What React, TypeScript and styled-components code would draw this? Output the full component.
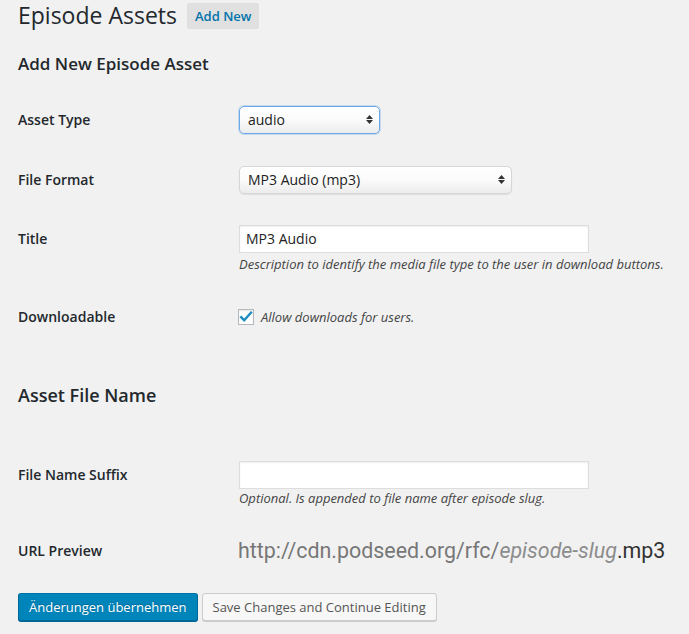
import React from "react";
import styled, { createGlobalStyle } from "styled-components";

const Global = createGlobalStyle`
  html, body { margin: 0; padding: 0; background: #f1f1f1; }
  body { font-family: "Open Sans", "DejaVu Sans", sans-serif; color: #23282d; font-size: 13px; }
  * { box-sizing: border-box; }
`;

const Page = styled.div`
  padding: 0 18px;
  width: 689px;
  height: 634px;
  overflow: hidden;
`;

const TitleBar = styled.div`
  display: flex;
  align-items: center;
  gap: 10px;
  padding-top: 1px;
  height: 30px;
`;

const PageTitle = styled.h1`
  margin: 0;
  font-size: 23px;
  font-weight: 400;
  line-height: 29px;
  color: #23282d;
`;

const AddNew = styled.a`
  display: inline-block;
  background: #e0e0e0;
  color: #0073aa;
  font-size: 13px;
  font-weight: 600;
  line-height: 18px;
  padding: 4px 8px;
  border-radius: 2px;
  text-decoration: none;
`;

const SectionTitle = styled.h2<{ $top: number; $size?: number }>`
  margin: ${(p) => p.$top}px 0 0;
  font-size: ${(p) => p.$size ?? 17}px;
  font-weight: 600;
  line-height: 24px;
  color: #23282d;
`;

const Row = styled.div<{ $pt: number; $pb: number }>`
  display: grid;
  grid-template-columns: 221px 1fr;
  padding: ${(p) => p.$pt}px 0 ${(p) => p.$pb}px;
`;

const Label = styled.div<{ $h?: number }>`
  font-size: 14px;
  font-weight: 600;
  line-height: ${(p) => p.$h ?? 28}px;
  color: #23282d;
`;

const Field = styled.div`
  display: flex;
  flex-direction: column;
  align-items: flex-start;
`;

const Select = styled.div<{ $w: number; $focus?: boolean }>`
  position: relative;
  width: ${(p) => p.$w}px;
  height: 28px;
  border-radius: 5px;
  border: 1px solid ${(p) => (p.$focus ? "#6fa8e6" : "#d6d6d6")};
  background: linear-gradient(#ffffff 0%, #fbfbfb 50%, #ececec 100%);
  box-shadow: ${(p) =>
    p.$focus ? "0 0 0 1px rgba(111,168,230,0.35)" : "0 1px 1px rgba(0,0,0,0.08)"};
  font-size: 14px;
  line-height: 26px;
  padding-left: 8px;
  color: #222;
`;

const Arrows = styled.span`
  position: absolute;
  right: 6px;
  top: 8px;
  display: flex;
  flex-direction: column;
  gap: 1px;
`;

const TextInput = styled.div`
  width: 350px;
  height: 28px;
  background: #fff;
  border: 1px solid #ddd;
  box-shadow: inset 0 1px 2px rgba(0, 0, 0, 0.07);
  font-size: 14px;
  line-height: 26px;
  padding-left: 6px;
  color: #222;
`;

const Desc = styled.p<{ $mt?: number }>`
  margin: ${(p) => p.$mt ?? 2}px 0 0;
  font-size: 13px;
  font-style: italic;
  line-height: 18px;
  color: #444;
`;

const CheckLine = styled.label`
  display: flex;
  align-items: center;
  gap: 7px;
  height: 28px;
  font-size: 13px;
  font-style: italic;
  color: #444;
  margin-left: -1px;
`;

const Box = styled.span`
  width: 16px;
  height: 16px;
  background: #fff;
  border: 1px solid #b4b9be;
  box-shadow: inset 0 1px 2px rgba(0, 0, 0, 0.1);
  display: flex;
  align-items: center;
  justify-content: center;
`;

const Url = styled.div`
  font-family: Roboto, "Liberation Sans", sans-serif;
  font-size: 21.4px;
  line-height: 28px;
  color: #777;
  margin-left: -1px;
`;

const Slug = styled.span`
  font-style: italic;
  color: #8c8c8c;
`;

const Ext = styled.span`
  color: #333;
`;

const Actions = styled.div`
  display: flex;
  gap: 4px;
  margin-top: 28px;
`;

const Button = styled.button<{ $primary?: boolean }>`
  font-family: "Open Sans", "DejaVu Sans", sans-serif;
  font-size: 13px;
  height: 28px;
  line-height: 26px;
  padding: 0 10px 1px;
  border-radius: 3px;
  border: 1px solid;
  cursor: pointer;
  ${(p) =>
    p.$primary
      ? `background:#0085ba;border-color:#0073aa #006799 #006799;color:#fff;box-shadow:0 1px 0 #006799;text-shadow:0 -1px 1px #006799;`
      : `background:#f7f7f7;border-color:#ccc;color:#555;box-shadow:0 1px 0 #ccc;`}
`;

const SelectArrows = () => (
  <Arrows>
    <svg width="7" height="4" viewBox="0 0 7 4"><path d="M3.5 0L7 4H0z" fill="#333" /></svg>
    <svg width="7" height="4" viewBox="0 0 7 4"><path d="M0 0h7L3.5 4z" fill="#333" /></svg>
  </Arrows>
);

export default function App() {
  return (
    <Page>
      <Global />
      <TitleBar>
        <PageTitle>Episode Assets</PageTitle>
        <AddNew href="#">Add New</AddNew>
      </TitleBar>
      <SectionTitle $top={22}>Add New Episode Asset</SectionTitle>

      <Row $pt={30} $pb={16}>
        <Label>Asset Type</Label>
        <Field>
          <Select $w={141} $focus>
            audio
            <SelectArrows />
          </Select>
        </Field>
      </Row>
      <Row $pt={16} $pb={16}>
        <Label>File Format</Label>
        <Field>
          <Select $w={273}>
            MP3 Audio (mp3)
            <SelectArrows />
          </Select>
        </Field>
      </Row>
      <Row $pt={15} $pb={16}>
        <Label>Title</Label>
        <Field>
          <TextInput>MP3 Audio</TextInput>
          <Desc>Description to identify the media file type to the user in download buttons.</Desc>
        </Field>
      </Row>
      <Row $pt={14} $pb={0}>
        <Label>Downloadable</Label>
        <Field>
          <CheckLine>
            <Box>
              <svg width="14" height="14" viewBox="0 0 14 14">
                <path d="M2.2 7.2l3 3.1L12 2.6" stroke="#1e8cbe" strokeWidth="2.4" fill="none" strokeLinecap="square" />
              </svg>
            </Box>
            Allow downloads for users.
          </CheckLine>
        </Field>
      </Row>

      <SectionTitle $top={52} $size={18}>Asset File Name</SectionTitle>

      <Row $pt={54} $pb={0}>
        <Label>File Name Suffix</Label>
        <Field>
          <TextInput />
          <Desc $mt={0}>Optional. Is appended to file name after episode slug.</Desc>
        </Field>
      </Row>
      <Row $pt={30} $pb={0}>
        <Label>URL Preview</Label>
        <Field>
          <Url>
            http://cdn.podseed.org/rfc/<Slug>episode-slug</Slug>
            <Ext>.mp3</Ext>
          </Url>
        </Field>
      </Row>

      <Actions>
        <Button $primary>Änderungen übernehmen</Button>
        <Button>Save Changes and Continue Editing</Button>
      </Actions>
    </Page>
  );
}
